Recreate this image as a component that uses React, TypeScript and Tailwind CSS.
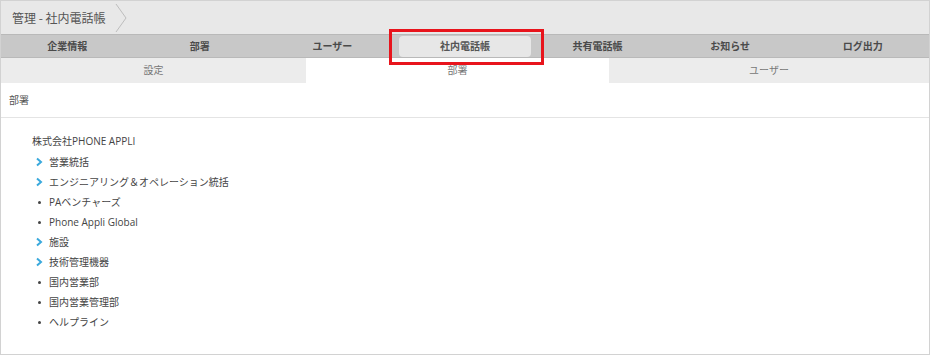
import React from 'react';

const mainTabs = ['企業情報', '部署', 'ユーザー', '社内電話帳', '共有電話帳', 'お知らせ', 'ログ出力'];

const subTabs = [
  { label: '設定', w: 'w-[305px]', active: false },
  { label: '部署', w: 'w-[303px]', active: true },
  { label: 'ユーザー', w: 'flex-1', active: false },
];

const tree = [
  { name: '営業統括', folder: true },
  { name: 'エンジニアリング＆オペレーション統括', folder: true },
  { name: 'PAベンチャーズ', folder: false },
  { name: 'Phone Appli Global', folder: false },
  { name: '施設', folder: true },
  { name: '技術管理機器', folder: true },
  { name: '国内営業部', folder: false },
  { name: '国内営業管理部', folder: false },
  { name: 'ヘルプライン', folder: false },
];

function Chevron() {
  return (
    <svg width="8" height="10" viewBox="0 0 8 10" className="mr-[6px] shrink-0">
      <path d="M2 1.5 L6 5 L2 8.5" fill="none" stroke="#3aa9dc" strokeWidth="2" />
    </svg>
  );
}

export default function App() {
  return (
    <div
      className="w-[930px] h-[355px] bg-white border border-[#d2d2d2] flex flex-col overflow-hidden text-[#444]"
      style={{ fontFamily: '"Open Sans", "Noto Sans CJK JP", sans-serif' }}
    >
      {/* breadcrumb */}
      <div className="h-[33px] bg-[#e8e8e8] flex items-center pl-[11px] shrink-0">
        <span className="text-[12px] text-[#555]" style={{ fontFamily: '"Noto Sans CJK JP", sans-serif' }}>
          管理 - 社内電話帳
        </span>
        <svg width="14" height="30" viewBox="0 0 14 30" className="ml-[9px]">
          <path d="M1 1 L11 15 L1 29" fill="none" stroke="#bdbdbd" strokeWidth="1" />
        </svg>
      </div>

      {/* main tabs */}
      <div className="relative h-[24px] bg-[#c8c8c8] border-t border-b border-[#b9b9b9] flex shrink-0">
        {mainTabs.map((t) => {
          const active = t === '社内電話帳';
          return (
            <div
              key={t}
              className={
                active
                  ? 'flex-1 flex items-center justify-center bg-[#e7e7e7] rounded-[4px] mt-[1px] text-[10px] font-bold text-[#555]'
                  : 'flex-1 flex items-center justify-center text-[10px] font-bold text-[#4a4a4a]'
              }
            >
              {t}
            </div>
          );
        })}
        <div className="absolute left-[388px] top-[-6px] w-[155px] h-[36px] border-[3px] border-[#e8141c] pointer-events-none" />
      </div>

      {/* sub tabs */}
      <div className="h-[25px] flex shrink-0">
        {subTabs.map((s) => (
          <div
            key={s.label}
            className={`${s.w} flex items-center justify-center text-[10px] text-[#777] ${s.active ? 'bg-white' : 'bg-[#ececec]'}`}
          >
            {s.label}
          </div>
        ))}
      </div>

      {/* section title */}
      <div className="h-[35px] flex items-center pl-[8px] border-b border-[#e4e4e4] shrink-0">
        <span className="text-[10px] text-[#555]">部署</span>
      </div>

      {/* tree */}
      <div className="pl-[31px] pt-[13px] text-[10px] text-[#444]">
        <div className="h-[20px] flex items-center">株式会社PHONE APPLI</div>
        <ul className="pl-[3px] pt-[1px]">
          {tree.map((n) => (
            <li key={n.name} className="h-[20px] flex items-center">
              {n.folder ? (
                <Chevron />
              ) : (
                <span className="w-[8px] mr-[6px] flex justify-center shrink-0">
                  <span className="w-[3px] h-[3px] rounded-full bg-[#444]" />
                </span>
              )}
              <span>{n.name}</span>
            </li>
          ))}
        </ul>
      </div>
    </div>
  );
}
